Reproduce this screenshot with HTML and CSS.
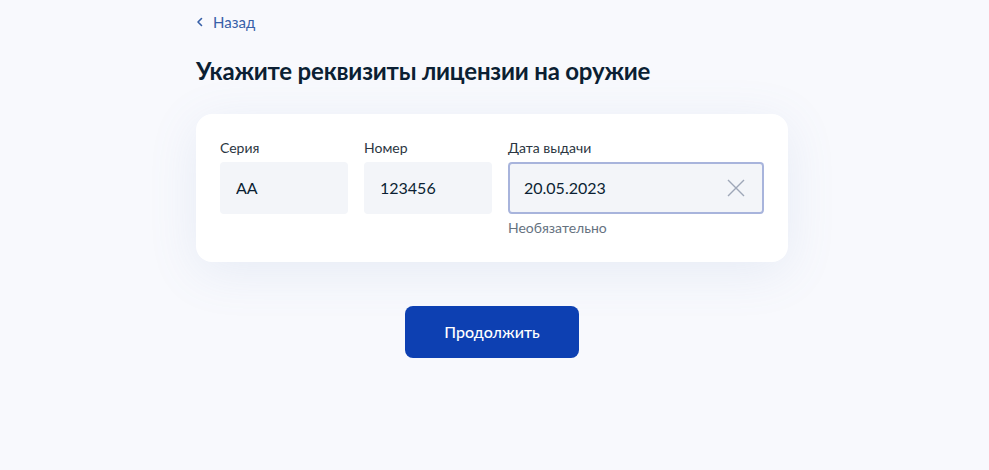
FILE: index.html
```html
<!DOCTYPE html>
<html lang="ru">
<head>
  <meta charset="UTF-8" />
  <meta name="viewport" content="width=device-width, initial-scale=1.0"/>
  <title>Лицензия на оружие</title>
  <link rel="stylesheet" href="styles.css">
</head>
<body>
  <div class="page">
    <a class="back-link" href="#">
      <svg width="8" height="10" viewBox="0 0 8 10"><path d="M5.5 1.5L2 5l3.5 3.5" fill="none" stroke="currentColor" stroke-width="1.6" stroke-linecap="round" stroke-linejoin="round"/></svg>
      <span>Назад</span>
    </a>
    <h1>Укажите реквизиты лицензии на оружие</h1>
    <form class="card" onsubmit="return false">
      <div class="field field-short">
        <label for="series">Серия</label>
        <input id="series" type="text" value="AA">
      </div>
      <div class="field field-short">
        <label for="number">Номер</label>
        <input id="number" type="text" value="123456">
      </div>
      <div class="field field-date">
        <label for="issued">Дата выдачи</label>
        <div class="input-wrap focused">
          <input id="issued" type="text" value="20.05.2023">
          <button type="button" class="clear" onclick="document.getElementById('issued').value = ''">
            <svg width="20" height="20" viewBox="0 0 20 20"><path d="M2 2l16 16M18 2L2 18" stroke="currentColor" stroke-width="1.4" fill="none"/></svg>
          </button>
        </div>
        <div class="hint">Необязательно</div>
      </div>
    </form>
    <div class="actions">
      <button class="primary" type="button">Продолжить</button>
    </div>
  </div>
</body>
</html>
```

FILE: styles.css
```css
body {
  font-family: Lato, "Open Sans", sans-serif;
  background-color: #f8f9fd;
  color: #0b1f33;
  margin: 0;
  padding: 0 5px 0 0;
}
.page {
  width: 592px;
  margin: 0 auto;
  padding-top: 11px;
}
.back-link {
  display: inline-flex;
  align-items: center;
  gap: 9px;
  color: #3760a8;
  text-decoration: none;
  font-size: 15px;
  line-height: 20px;
}
.back-link svg {
  margin-top: 1px;
}
h1 {
  margin: 25px 0 0;
  font-size: 24px;
  font-weight: 700;
  line-height: 28px;
  letter-spacing: -0.2px;
}
.card {
  display: flex;
  gap: 16px;
  margin-top: 29px;
  background: #fff;
  border-radius: 16px;
  padding: 24px 24px 24px;
  box-shadow: 0 10px 50px rgba(110, 140, 190, 0.12);
}
.field label {
  display: block;
  font-size: 14px;
  line-height: 20px;
  margin-bottom: 4px;
  color: #2b3641;
}
.field-short {
  width: 128px;
}
.field-date {
  width: 256px;
}
.field input {
  box-sizing: border-box;
  width: 100%;
  height: 52px;
  border: none;
  border-radius: 4px;
  background: #f3f5f9;
  padding: 0 16px;
  font-family: inherit;
  font-size: 16px;
  color: #0b1f33;
  outline: none;
}
.input-wrap {
  position: relative;
}
.input-wrap.focused input {
  border: 2px solid #a8b4dc;
  padding: 0 48px 0 14px;
}
.clear {
  position: absolute;
  right: 18px;
  top: 16px;
  width: 20px;
  height: 20px;
  padding: 0;
  border: none;
  background: none;
  color: #9ea7b8;
  cursor: pointer;
}
.hint {
  margin-top: 4px;
  font-size: 14px;
  line-height: 20px;
  color: #66727f;
}
.actions {
  display: flex;
  justify-content: center;
  margin-top: 44px;
}
.primary {
  width: 174px;
  height: 52px;
  border: none;
  border-radius: 8px;
  background: #0d40b2;
  color: #fff;
  font-family: inherit;
  font-size: 16px;
  font-weight: 500;
  cursor: pointer;
}
```
